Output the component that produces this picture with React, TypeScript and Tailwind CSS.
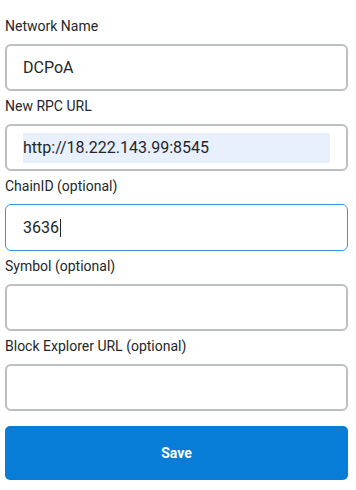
import React from 'react';

interface Field {
  label: string;
  value?: string;
  autofill?: boolean;
  focused?: boolean;
}

const fields: Field[] = [
  { label: 'Network Name', value: 'DCPoA' },
  { label: 'New RPC URL', value: 'http://18.222.143.99:8545', autofill: true },
  { label: 'ChainID (optional)', value: '3636', focused: true },
  { label: 'Symbol (optional)' },
  { label: 'Block Explorer URL (optional)' },
];

function FieldRow({ field }: { field: Field }) {
  return (
    <div>
      <div className="pt-[7px] pb-[9px] text-[14px] leading-[17px] text-[#24272a]">{field.label}</div>
      <div
        className={`h-[47px] rounded-[6px] flex items-center ${
          field.focused ? 'border border-[#3d93dc] px-[17px]' : 'border-2 border-[#bcc0c4] px-4'
        }`}
      >
        <div
          className={`flex-1 h-[30px] flex items-center text-[16px] text-[#24272a] ${
            field.autofill ? 'bg-[#e8f0fe]' : ''
          }`}
        >
          {field.value}
          {field.focused && <span className="inline-block w-px h-[18px] bg-[#24272a] ml-[1px]" />}
        </div>
      </div>
    </div>
  );
}

export default function App() {
  return (
    <div
      className="w-[356px] h-[490px] bg-white pl-[5px] pr-[8px] pt-[11px]"
      style={{ fontFamily: 'Roboto, "Liberation Sans", sans-serif' }}
    >
      {fields.map((f) => (
        <FieldRow key={f.label} field={f} />
      ))}
      <button className="mt-[15px] w-full h-[54px] rounded-[5px] bg-[#077dd7] text-white text-[14px] font-bold">
        Save
      </button>
    </div>
  );
}
